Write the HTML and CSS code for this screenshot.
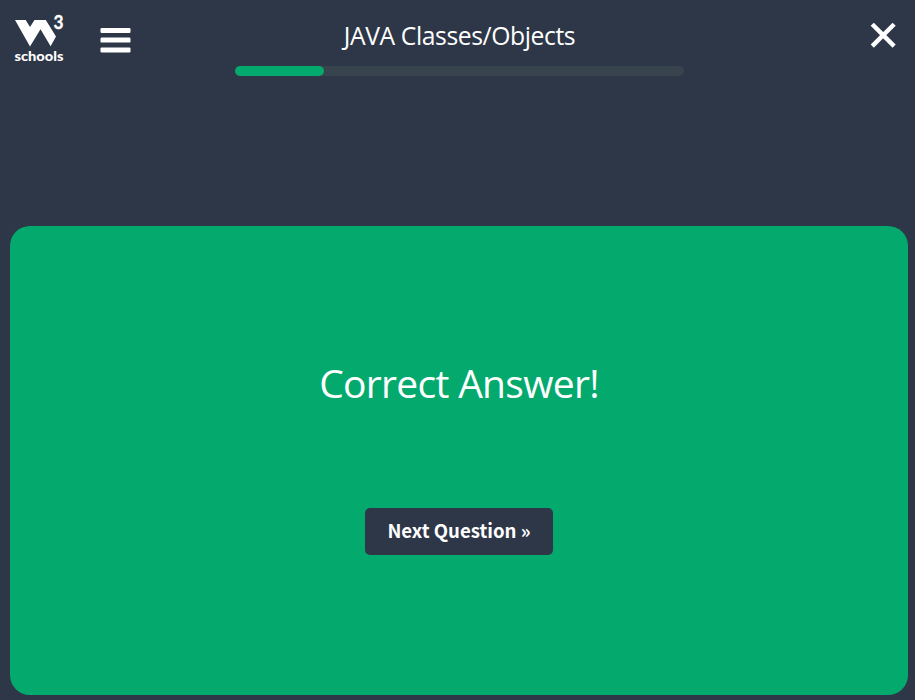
FILE: index.html
```html
<!DOCTYPE html>
<html lang="en">
<head>
<meta charset="utf-8">
<title>JAVA Classes/Objects</title>
<link rel="stylesheet" href="styles.css">
</head>
<body>
<header class="top">
  <div class="left">
    <svg class="logo" width="52" height="56" viewBox="14 8 52 56">
      <path fill="#fff" d="M15 20H25.7L30 27L34.5 20H45.8L56 36.5L50.6 46.3L40.5 29.3L30 46.5Z"/>
      <text class="three" x="53.5" y="29" textLength="10" lengthAdjust="spacingAndGlyphs">3</text>
      <text class="word" x="14.5" y="61" textLength="49" lengthAdjust="spacingAndGlyphs">schools</text>
    </svg>
    <svg class="menu" width="31" height="25" viewBox="0 0 31 25" fill="#fff">
      <rect x=".5" y="0" width="30" height="5" rx="1.2"/><rect x=".5" y="9.6" width="30" height="5" rx="1.2"/><rect x=".5" y="19.4" width="30" height="5" rx="1.2"/>
    </svg>
  </div>
  <div class="middle">
    <h1 class="title">JAVA Classes/Objects</h1>
    <div class="track"><div class="bar"></div></div>
  </div>
  <svg class="close" width="26" height="26" viewBox="0 0 26 26"><path d="M3.8 3.8L22.6 22.6M22.6 3.8L3.8 22.6" stroke="#fff" stroke-width="4.4" stroke-linecap="square"/></svg>
</header>
<main class="card">
  <h2 class="result">Correct Answer!</h2>
  <button class="next">Next Question »</button>
</main>
</body>
</html>
```

FILE: styles.css
```css
* { box-sizing: border-box; }
body {
  margin: 0;
  height: 700px;
  overflow: hidden;
  background: #2d3748;
  color: #fff;
  font-family: "Open Sans", "Noto Sans", sans-serif;
}
.top {
  display: grid;
  grid-template-columns: 235px 449px 1fr;
  height: 226px;
  align-items: start;
}
.left { display: flex; padding: 8px 0 0 14px; }
.logo { flex: none; }
.three { font: 700 18.5px Lato, sans-serif; fill: #fff; stroke: #fff; stroke-width: .3px; }
.word { font: 900 13.5px Lato, sans-serif; fill: #fff; }
.menu { margin: 20px 0 0 34px; }
.middle { padding-top: 18px; }
.title {
  margin: 0 0 12px;
  font-size: 24.7px;
  line-height: 36px;
  font-weight: 400;
  text-align: center;
  white-space: nowrap;
  letter-spacing: -0.4px;
}
.track { height: 10px; border-radius: 5px; background: #38444d; }
.bar { width: 89px; height: 10px; border-radius: 5px; background: #04aa6d; }
.close { justify-self: end; margin: 22px 19px 0 0; }
.card {
  display: flex;
  flex-direction: column;
  align-items: center;
  width: 898px;
  height: 469px;
  margin-left: 10px;
  padding-top: 127px;
  border-radius: 20px;
  background: #04aa6d;
}
.result {
  margin: 0 0 95px;
  font-size: 39px;
  line-height: 60px;
  font-weight: 400;
  white-space: nowrap;
  letter-spacing: -0.7px;
}
.next {
  width: 188px;
  height: 47px;
  padding: 0 0 3px;
  border: 0;
  border-radius: 5px;
  background: #2d3748;
  color: #fff;
  font: 700 18.6px/44px "Noto Sans CJK JP", sans-serif;
  white-space: nowrap;
}
```
